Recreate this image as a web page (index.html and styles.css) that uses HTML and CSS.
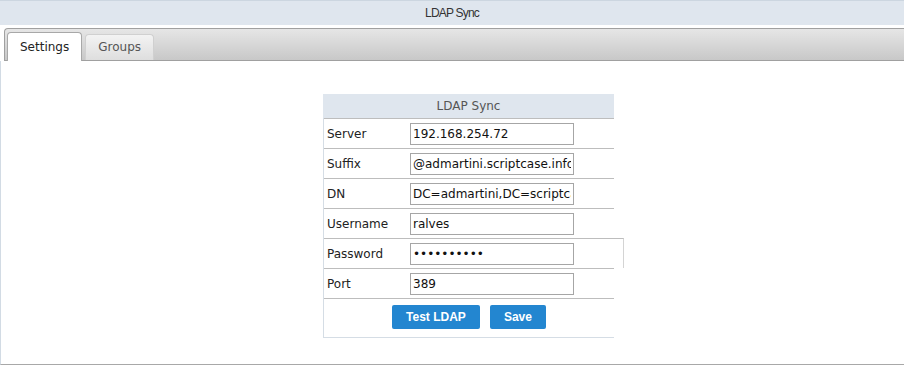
FILE: index.html
```html
<!DOCTYPE html>
<html lang="en">
<head>
  <meta charset="UTF-8" />
  <title>LDAP Sync</title>
  <link rel="stylesheet" href="styles.css">
</head>
<body>

<header class="title-bar">LDAP Sync</header>

<nav class="tab-bar">
  <a class="tab active" href="#">Settings</a>
  <a class="tab" href="#">Groups</a>
</nav>

<main class="panel">
  <form class="ldap-form">
    <div class="form-title">LDAP Sync</div>

    <div class="row">
      <label for="server">Server</label>
      <input type="text" id="server" value="192.168.254.72">
    </div>
    <div class="row">
      <label for="suffix">Suffix</label>
      <input type="text" id="suffix" value="@admartini.scriptcase.info">
    </div>
    <div class="row">
      <label for="dn">DN</label>
      <input type="text" id="dn" value="DC=admartini,DC=scriptcase,DC=info">
    </div>
    <div class="row">
      <label for="username">Username</label>
      <input type="text" id="username" value="ralves">
    </div>
    <div class="row row-wide">
      <label for="password">Password</label>
      <input type="password" id="password" value="ralves1234">
    </div>
    <div class="row">
      <label for="port">Port</label>
      <input type="text" id="port" value="389">
    </div>

    <div class="actions">
      <button type="button">Test LDAP</button>
      <button type="button">Save</button>
    </div>
  </form>
</main>

</body>
</html>
```

FILE: styles.css
```css
body {
  margin: 0;
  font-family: "DejaVu Sans", Verdana, sans-serif;
  font-size: 12px;
  color: #222;
  background: #fff;
}

.title-bar {
  height: 24px;
  line-height: 24px;
  border-top: 1px solid #ccd6e0;
  background-color: #dfe6ee;
  text-align: center;
  font-family: "Liberation Sans", Arial, sans-serif;
  font-size: 12px;
  letter-spacing: -0.8px;
  color: #333;
}

.tab-bar {
  display: flex;
  align-items: flex-end;
  gap: 3px;
  height: 31px;
  margin: 3px 0 0 4px;
  padding-left: 2px;
  border-top: 1px solid #a0a0a0;
  border-left: 1px solid #a0a0a0;
  border-bottom: 1px solid #a0a0a0;
  border-top-left-radius: 4px;
  background: linear-gradient(#e6e6e6, #c8c8c8);
}

.tab {
  display: block;
  height: 25px;
  line-height: 25px;
  padding: 0 12px;
  border: 1px solid #d0d0d0;
  border-bottom: none;
  border-radius: 4px 4px 0 0;
  background: linear-gradient(#f3f3f3, #dedede);
  color: #555;
  text-decoration: none;
}

.tab.active {
  height: 28px;
  line-height: 28px;
  margin-bottom: -1px;
  border-color: #a8a8a8;
  background: #fff;
  color: #222;
}

.panel {
  height: 304px;
  border-left: 1px solid #d2dbe4;
  border-bottom: 1px solid #a8a8a8;
  padding-top: 33px;
  box-sizing: border-box;
}

.ldap-form {
  width: 290px;
  margin-left: 322px;
  border-left: 1px solid #d5dde5;
  border-bottom: 1px solid #d5dde5;
}

.form-title {
  height: 24px;
  line-height: 24px;
  margin-left: -1px;
  background-color: #dfe6ee;
  text-align: center;
  color: #555;
}

.row {
  display: flex;
  align-items: center;
  height: 29px;
  border-top: 1px solid #bdbdbd;
}

.row:first-of-type {
  height: 30px;
  border-top: none;
}

.row-wide {
  margin-right: -10px;
  border-right: 1px solid #d4d4d4;
}

.row label {
  width: 83px;
  padding-left: 3px;
  color: #222;
}

.row input {
  width: 164px;
  height: 22px;
  box-sizing: border-box;
  margin: 0;
  padding: 0 2px;
  border: 1px solid #a6a6a6;
  font-family: "DejaVu Sans", Verdana, sans-serif;
  font-size: 12px;
  color: #111;
}

.actions {
  display: flex;
  justify-content: center;
  align-items: flex-start;
  gap: 10px;
  height: 32px;
  padding-top: 6px;
  border-top: 1px solid #bdbdbd;
}

.actions button {
  height: 24px;
  padding: 0 14px;
  border: none;
  border-radius: 2px;
  background-color: #2386d0;
  color: #fff;
  font-family: "Liberation Sans", Arial, sans-serif;
  font-weight: bold;
  font-size: 12px;
  cursor: pointer;
}
```
